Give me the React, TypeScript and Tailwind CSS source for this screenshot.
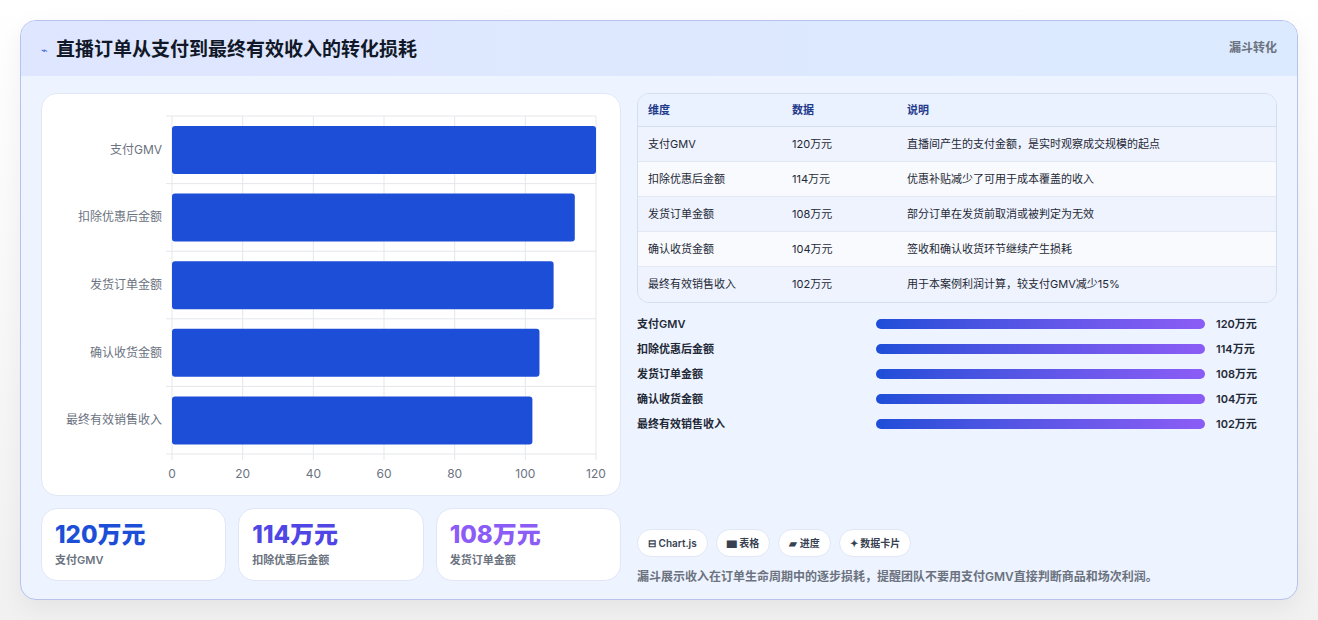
import React from "react";

const rows = [
  { k: "支付GMV", v: 120, d: "直播间产生的支付金额，是实时观察成交规模的起点" },
  { k: "扣除优惠后金额", v: 114, d: "优惠补贴减少了可用于成本覆盖的收入" },
  { k: "发货订单金额", v: 108, d: "部分订单在发货前取消或被判定为无效" },
  { k: "确认收货金额", v: 104, d: "签收和确认收货环节继续产生损耗" },
  { k: "最终有效销售收入", v: 102, d: "用于本案例利润计算，较支付GMV减少15%" },
];

function Chart() {
  const x0 = 130, x1 = 554, y0 = 22, y1 = 360;
  const sx = (v: number) => x0 + ((x1 - x0) * v) / 120;
  const band = (y1 - y0) / 5;
  return (
    <svg width="580" height="402" className="block">
      {[0, 20, 40, 60, 80, 100, 120].map((t) => (
        <g key={t}>
          <line x1={sx(t)} x2={sx(t)} y1={y0} y2={y1 + 6} stroke="#e5e7eb" />
          <text x={sx(t)} y={384} fontSize="12" fill="#6b7280" textAnchor="middle">{t}</text>
        </g>
      ))}
      {[0, 1, 2, 3, 4, 5].map((i) => (
        <line key={i} x1={x0 - 6} x2={x1} y1={y0 + band * i} y2={y0 + band * i} stroke="#e5e7eb" />
      ))}
      {rows.map((r, i) => (
        <g key={r.k}>
          <rect x={x0} y={y0 + band * i + 10} width={sx(r.v) - x0} height={48} rx="3" fill="#1d4ed8" />
          <text x={x0 - 10} y={y0 + band * i + band / 2 + 4} fontSize="12" fill="#6b7280" textAnchor="end">{r.k}</text>
        </g>
      ))}
    </svg>
  );
}

export default function App() {
  return (
    <div className="w-[1318px] h-[620px] bg-gradient-to-b from-white to-[#f1f1f1] pt-5 px-5" style={{ fontFamily: "Inter, 'Noto Sans CJK SC', sans-serif" }}>
      <div className="w-[1278px] h-[580px] rounded-2xl border border-[#b7c3ee] bg-[#eef4ff] overflow-hidden shadow-[0_8px_24px_rgba(0,0,0,0.06)]">
        <div className="h-[55px] bg-gradient-to-r from-[#dfe6ff] to-[#dbeafe] flex items-start justify-between px-5 pt-4">
          <div className="flex items-center gap-2">
            <span className="text-[#3b63d9] text-[11px]">⌁</span>
            <span className="text-[19px] font-bold text-[#111827] leading-[26px]">直播订单从支付到最终有效收入的转化损耗</span>
          </div>
          <span className="text-[12px] font-bold text-[#6b7280] mt-0.5">漏斗转化</span>
        </div>
        <div className="flex gap-4 px-5 pt-[17px]">
          <div className="w-[580px] flex flex-col gap-3">
            <div className="h-[403px] bg-white rounded-2xl border border-[#e0e7f5]"><Chart /></div>
            <div className="grid grid-cols-3 gap-3">
              {[
                ["120万元", "支付GMV", "text-[#1d4ed8]"],
                ["114万元", "扣除优惠后金额", "text-[#4f46e5]"],
                ["108万元", "发货订单金额", "text-[#8b5cf6]"],
              ].map(([a, b, c]) => (
                <div key={b} className="h-[73px] rounded-2xl bg-white border border-[#dfe6f7] px-[13px] pt-[11px]">
                  <div className={`text-[24px] font-extrabold leading-[30px] ${c}`}>{a}</div>
                  <div className="text-[11px] font-semibold text-[#6b7280] mt-[2px]">{b}</div>
                </div>
              ))}
            </div>
          </div>
          <div className="w-[643px] flex flex-col">
            <div className="rounded-xl border border-[#d5deee] overflow-hidden text-[11px]">
              <div className="flex h-[33px] items-center bg-[#eaf1ff] text-[#1e3a8a] font-semibold border-b border-[#d5deee]">
                <div className="w-[154px] pl-[10px]">维度</div>
                <div className="w-[115px]">数据</div>
                <div>说明</div>
              </div>
              {rows.map((r, i) => (
                <div key={r.k} className={`flex h-[35px] items-center text-[#1f2937] ${i % 2 ? "bg-[#f8fafd]" : "bg-[#eef3fd]"} ${i < 4 ? "border-b border-[#e3e9f4]" : ""}`}>
                  <div className="w-[154px] pl-[10px]">{r.k}</div>
                  <div className="w-[115px]">{r.v}万元</div>
                  <div>{r.d}</div>
                </div>
              ))}
            </div>
            <div className="flex flex-col gap-[7px] mt-[12px]">
              {rows.map((r) => (
                <div key={r.k} className="flex items-center h-[18px] text-[11px] font-semibold text-[#1f2937]">
                  <div className="w-[239px]">{r.k}</div>
                  <div className="w-[329px] h-[10px] rounded-full bg-gradient-to-r from-[#1d4ed8] to-[#8b5cf6]"></div>
                  <div className="ml-[11px]">{r.v}万元</div>
                </div>
              ))}
            </div>
            <div className="flex gap-2 mt-[96px]">
              {["⊟ Chart.js", "▆ 表格", "▰ 进度", "✦ 数据卡片"].map((p) => (
                <span key={p} className="h-[28px] px-[10px] flex items-center rounded-full bg-white border border-[#e0e7f5] text-[10px] font-semibold text-[#374151]">{p}</span>
              ))}
            </div>
            <div className="mt-[11px] text-[12px] font-semibold text-[#6b7280]">漏斗展示收入在订单生命周期中的逐步损耗，提醒团队不要用支付GMV直接判断商品和场次利润。</div>
          </div>
        </div>
      </div>
    </div>
  );
}
